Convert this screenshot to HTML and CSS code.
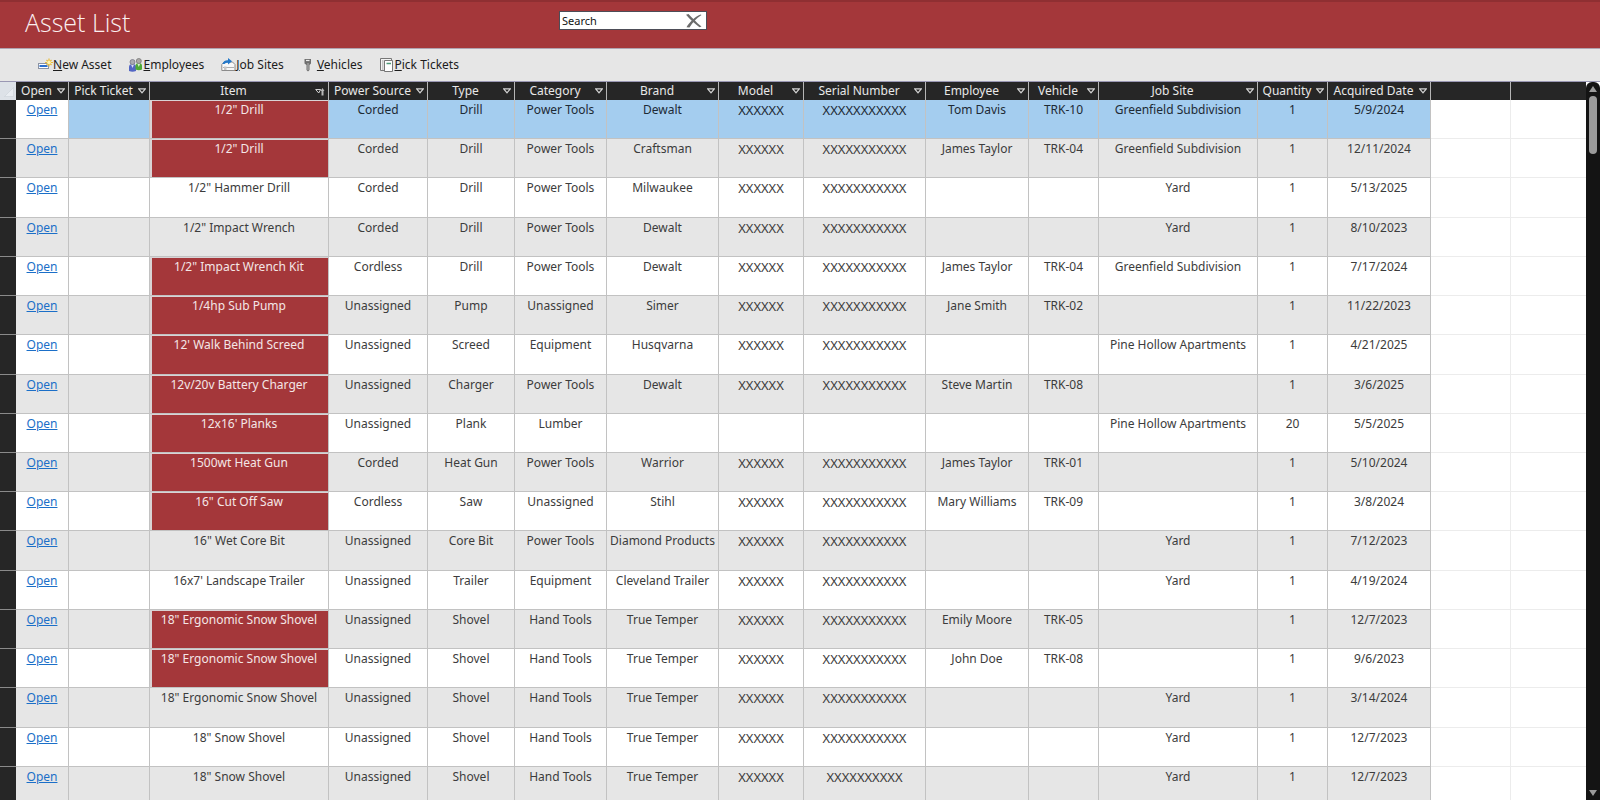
FILE: index.html
```html
<!DOCTYPE html>
<html lang="en">
<head>
<meta charset="utf-8">
<title>Asset List</title>
<link rel="stylesheet" href="styles.css">
</head>
<body>
<svg class="defs" width="0" height="0" aria-hidden="true">
  <symbol id="tri" viewBox="0 0 8 6"><path d="M.7.8h6.6L4 4.8z" fill="none" stroke="#d4d4d4" stroke-width="1.2"/></symbol>
</svg>
<header class="banner">
  <h1 class="title">Asset List</h1>
  <form class="search">
    <input class="search-input" type="text" value="Search" aria-label="Search">
    <button class="search-clear" type="button" aria-label="Clear search">
      <svg width="16" height="14" viewBox="0 0 16 14"><path d="M0 .8 2.500 0C6 3.600 10.500 8.500 15.500 12.600L13.500 13.300C9 10 4 5.500 0 .8z" fill="#6c6c6c"/><path d="M14.500.4 15.500 1C10 4.500 6.500 8.500 3.500 13.400L.5 13.200C3.500 8 8.500 3 14.500.4z" fill="#6c6c6c"/></svg>
    </button>
  </form>
</header>
<nav class="toolbar" aria-label="Commands">
  <button class="command" type="button"><svg width="15" height="14" viewBox="0 0 15 14"><rect x=".5" y="5.500" width="10" height="5" fill="#fff" stroke="#8b93a3"/><rect x="1.500" y="7" width="8" height="2" fill="#2b6fd0"/><path d="M11 .5v8M7 4.500h8M8.500 2l5 5M13.500 2l-5 5" stroke="#e9bd3a" stroke-width="1.200"/><circle cx="11" cy="4.500" r="1.800" fill="#fff3b0"/></svg><span><u>N</u>ew Asset</span></button>
  <button class="command" type="button"><svg width="15" height="14" viewBox="0 0 15 14"><path d="M1 13V9q0-3 3.500-3T8 9v4q-3.500 1.500-7 0z" fill="#5366c4"/><path d="M3 6.500 4.500 10 6 6.500z" fill="#d8ddf5"/><circle cx="4.500" cy="4" r="2.500" fill="#a9aab2" stroke="#777987" stroke-width=".8"/><path d="M7.500 11.500V8q0-3 3.300-3T14 8v3.500q-3.200 1.500-6.500 0z" fill="#4eaa36"/><path d="m9.300 5.500 1.500 3.500 1.500-3.500z" fill="#d9f2d0"/><circle cx="10.800" cy="3" r="2.500" fill="#aaa8a6" stroke="#777" stroke-width=".8"/></svg><span><u>E</u>mployees</span></button>
  <button class="command" type="button"><svg width="15" height="14" viewBox="0 0 15 14"><path d="M.8 6.500 3 4h8.500l2.500 2.500v6H.8z" fill="#f8f8f8" stroke="#8c8c8c"/><path d="M2 9.500h11" stroke="#b0b0b0"/><path d="M3 12V8.500h2.500V12" fill="#c6c6c6"/><path d="M1.500 6Q2.500 2 7 2.200V0L11 3.300 7 6.500V4.800Q5 4.500 3.500 6z" fill="#2478c9"/></svg><span><u>J</u>ob Sites</span></button>
  <button class="command command-wide" type="button"><svg width="10" height="14" viewBox="0 0 10 14"><path d="M1.500 1h6.500v4.500L6.500 7v5L5 13.500 3.500 12V7l-2-1.500z" fill="#6f6f6f"/><path d="M3 2.500h3.500" stroke="#eee" stroke-width="1.200"/><path d="M5 5v7" stroke="#b8b8b8"/></svg><span><u>V</u>ehicles</span></button>
  <button class="command" type="button"><svg width="15" height="14" viewBox="0 0 15 14"><path d="M.5.5h11v12H.5z" fill="#f3f3f3" stroke="#777"/><path d="M2 3h1.500M2 5h1.500M2 7h1.500M2 9h1.500M2 11h1.500" stroke="#999"/><path d="M4.500 2.500h8v11h-8z" fill="#fff" stroke="#777"/><path d="M6.500 5.500h4.500" stroke="#4f9a79" stroke-width="1.500"/></svg><span><u>P</u>ick Tickets</span></button>
</nav>
<main class="datasheet">
<div class="sheet">
<table class="assets">
<colgroup><col class="w-mark"><col class="w-open"><col class="w-ticket"><col class="w-item"><col class="w-power"><col class="w-type"><col class="w-category"><col class="w-brand"><col class="w-model"><col class="w-serial"><col class="w-employee"><col class="w-vehicle"><col class="w-site"><col class="w-qty"><col class="w-date"><col class="w-blank"><col></colgroup>
<thead><tr>
<td class="corner"><svg width="10" height="10" viewBox="0 0 10 10"><path d="M9.500.5v9H.5z" fill="#e9edf2" stroke="#cbd1d9" stroke-width=".6"/></svg></td>
<th>Open<button class="sort" type="button" aria-label="Filter Open"><svg width="8" height="6"><use href="#tri"/></svg></button></th>
<th>Pick Ticket<button class="sort" type="button" aria-label="Filter Pick Ticket"><svg width="8" height="6"><use href="#tri"/></svg></button></th>
<th>Item<button class="sort" type="button" aria-label="Filter Item, sorted"><svg width="10" height="8" viewBox="0 0 10 8"><path d="M.7 1.500h5L3.700 5z" fill="none" stroke="#d4d4d4"/><path d="M7.500 0 9.500 3H8.500v4.500h-2V3h-1z" fill="#b8b8b8"/></svg></button></th>
<th>Power Source<button class="sort" type="button" aria-label="Filter Power Source"><svg width="8" height="6"><use href="#tri"/></svg></button></th>
<th>Type<button class="sort" type="button" aria-label="Filter Type"><svg width="8" height="6"><use href="#tri"/></svg></button></th>
<th>Category<button class="sort" type="button" aria-label="Filter Category"><svg width="8" height="6"><use href="#tri"/></svg></button></th>
<th>Brand<button class="sort" type="button" aria-label="Filter Brand"><svg width="8" height="6"><use href="#tri"/></svg></button></th>
<th>Model<button class="sort" type="button" aria-label="Filter Model"><svg width="8" height="6"><use href="#tri"/></svg></button></th>
<th>Serial Number<button class="sort" type="button" aria-label="Filter Serial Number"><svg width="8" height="6"><use href="#tri"/></svg></button></th>
<th>Employee<button class="sort" type="button" aria-label="Filter Employee"><svg width="8" height="6"><use href="#tri"/></svg></button></th>
<th>Vehicle<button class="sort" type="button" aria-label="Filter Vehicle"><svg width="8" height="6"><use href="#tri"/></svg></button></th>
<th>Job Site<button class="sort" type="button" aria-label="Filter Job Site"><svg width="8" height="6"><use href="#tri"/></svg></button></th>
<th>Quantity<button class="sort" type="button" aria-label="Filter Quantity"><svg width="8" height="6"><use href="#tri"/></svg></button></th>
<th>Acquired Date<button class="sort" type="button" aria-label="Filter Acquired Date"><svg width="8" height="6"><use href="#tri"/></svg></button></th>
<td></td><td class="last"></td>
</tr></thead>
<tbody>
<tr class="selected"><td class="mark"><td class="open"><a href="#">Open</a><td><td class="out">1/2" Drill<td>Corded<td>Drill<td>Power Tools<td>Dewalt<td class="code">XXXXXX<td class="code">XXXXXXXXXXX<td>Tom Davis<td>TRK-10<td>Greenfield Subdivision<td>1<td>5/9/2024<td class="blank"><td class="blank last"></tr>
<tr><td class="mark"><td><a href="#">Open</a><td><td class="out">1/2" Drill<td>Corded<td>Drill<td>Power Tools<td>Craftsman<td class="code">XXXXXX<td class="code">XXXXXXXXXXX<td>James Taylor<td>TRK-04<td>Greenfield Subdivision<td>1<td>12/11/2024<td class="blank"><td class="blank last"></tr>
<tr><td class="mark"><td><a href="#">Open</a><td><td>1/2" Hammer Drill<td>Corded<td>Drill<td>Power Tools<td>Milwaukee<td class="code">XXXXXX<td class="code">XXXXXXXXXXX<td><td><td>Yard<td>1<td>5/13/2025<td class="blank"><td class="blank last"></tr>
<tr><td class="mark"><td><a href="#">Open</a><td><td>1/2" Impact Wrench<td>Corded<td>Drill<td>Power Tools<td>Dewalt<td class="code">XXXXXX<td class="code">XXXXXXXXXXX<td><td><td>Yard<td>1<td>8/10/2023<td class="blank"><td class="blank last"></tr>
<tr><td class="mark"><td><a href="#">Open</a><td><td class="out">1/2" Impact Wrench Kit<td>Cordless<td>Drill<td>Power Tools<td>Dewalt<td class="code">XXXXXX<td class="code">XXXXXXXXXXX<td>James Taylor<td>TRK-04<td>Greenfield Subdivision<td>1<td>7/17/2024<td class="blank"><td class="blank last"></tr>
<tr><td class="mark"><td><a href="#">Open</a><td><td class="out">1/4hp Sub Pump<td>Unassigned<td>Pump<td>Unassigned<td>Simer<td class="code">XXXXXX<td class="code">XXXXXXXXXXX<td>Jane Smith<td>TRK-02<td><td>1<td>11/22/2023<td class="blank"><td class="blank last"></tr>
<tr><td class="mark"><td><a href="#">Open</a><td><td class="out">12' Walk Behind Screed<td>Unassigned<td>Screed<td>Equipment<td>Husqvarna<td class="code">XXXXXX<td class="code">XXXXXXXXXXX<td><td><td>Pine Hollow Apartments<td>1<td>4/21/2025<td class="blank"><td class="blank last"></tr>
<tr><td class="mark"><td><a href="#">Open</a><td><td class="out">12v/20v Battery Charger<td>Unassigned<td>Charger<td>Power Tools<td>Dewalt<td class="code">XXXXXX<td class="code">XXXXXXXXXXX<td>Steve Martin<td>TRK-08<td><td>1<td>3/6/2025<td class="blank"><td class="blank last"></tr>
<tr><td class="mark"><td><a href="#">Open</a><td><td class="out">12x16' Planks<td>Unassigned<td>Plank<td>Lumber<td><td><td><td><td><td>Pine Hollow Apartments<td>20<td>5/5/2025<td class="blank"><td class="blank last"></tr>
<tr><td class="mark"><td><a href="#">Open</a><td><td class="out">1500wt Heat Gun<td>Corded<td>Heat Gun<td>Power Tools<td>Warrior<td class="code">XXXXXX<td class="code">XXXXXXXXXXX<td>James Taylor<td>TRK-01<td><td>1<td>5/10/2024<td class="blank"><td class="blank last"></tr>
<tr><td class="mark"><td><a href="#">Open</a><td><td class="out">16" Cut Off Saw<td>Cordless<td>Saw<td>Unassigned<td>Stihl<td class="code">XXXXXX<td class="code">XXXXXXXXXXX<td>Mary Williams<td>TRK-09<td><td>1<td>3/8/2024<td class="blank"><td class="blank last"></tr>
<tr><td class="mark"><td><a href="#">Open</a><td><td>16" Wet Core Bit<td>Unassigned<td>Core Bit<td>Power Tools<td>Diamond Products<td class="code">XXXXXX<td class="code">XXXXXXXXXXX<td><td><td>Yard<td>1<td>7/12/2023<td class="blank"><td class="blank last"></tr>
<tr><td class="mark"><td><a href="#">Open</a><td><td>16x7' Landscape Trailer<td>Unassigned<td>Trailer<td>Equipment<td>Cleveland Trailer<td class="code">XXXXXX<td class="code">XXXXXXXXXXX<td><td><td>Yard<td>1<td>4/19/2024<td class="blank"><td class="blank last"></tr>
<tr><td class="mark"><td><a href="#">Open</a><td><td class="out">18" Ergonomic Snow Shovel<td>Unassigned<td>Shovel<td>Hand Tools<td>True Temper<td class="code">XXXXXX<td class="code">XXXXXXXXXXX<td>Emily Moore<td>TRK-05<td><td>1<td>12/7/2023<td class="blank"><td class="blank last"></tr>
<tr><td class="mark"><td><a href="#">Open</a><td><td class="out">18" Ergonomic Snow Shovel<td>Unassigned<td>Shovel<td>Hand Tools<td>True Temper<td class="code">XXXXXX<td class="code">XXXXXXXXXXX<td>John Doe<td>TRK-08<td><td>1<td>9/6/2023<td class="blank"><td class="blank last"></tr>
<tr><td class="mark"><td><a href="#">Open</a><td><td>18" Ergonomic Snow Shovel<td>Unassigned<td>Shovel<td>Hand Tools<td>True Temper<td class="code">XXXXXX<td class="code">XXXXXXXXXXX<td><td><td>Yard<td>1<td>3/14/2024<td class="blank"><td class="blank last"></tr>
<tr><td class="mark"><td><a href="#">Open</a><td><td>18" Snow Shovel<td>Unassigned<td>Shovel<td>Hand Tools<td>True Temper<td class="code">XXXXXX<td class="code">XXXXXXXXXXX<td><td><td>Yard<td>1<td>12/7/2023<td class="blank"><td class="blank last"></tr>
<tr><td class="mark"><td><a href="#">Open</a><td><td>18" Snow Shovel<td>Unassigned<td>Shovel<td>Hand Tools<td>True Temper<td class="code">XXXXXX<td class="code">XXXXXXXXXX<td><td><td>Yard<td>1<td>12/7/2023<td class="blank"><td class="blank last"></tr>
</tbody>
</table>
</div>
<div class="scrollbar">
  <button class="scroll-step" type="button" aria-label="Scroll up"><svg width="8" height="6" viewBox="0 0 8 6"><path d="M4 0 8 6H0z" fill="#9b9b9b"/></svg></button>
  <div class="scroll-track"><div class="scroll-thumb"></div></div>
  <button class="scroll-step" type="button" aria-label="Scroll down"><svg width="8" height="6" viewBox="0 0 8 6"><path d="M0 0h8L4 6z" fill="#9b9b9b"/></svg></button>
</div>
</main>
</body>
</html>
```
FILE: styles.css
```css
* { box-sizing: border-box; }
body {
  margin: 0;
  height: 100vh;
  display: flex;
  flex-direction: column;
  overflow: hidden;
  font: 12px/18px "Noto Sans", "Open Sans", sans-serif;
  color: #3c3c3c;
  background: #fff;
}
.defs { position: absolute; }
button { font: inherit; color: inherit; background: none; border: 0; padding: 0; margin: 0; }
svg { display: block; flex: none; }

.banner {
  flex: none;
  display: grid;
  grid-template-columns: 35% 1fr;
  height: 49px;
  background: #a4373a;
  border-top: 2px solid #8f2f32;
  border-bottom: 1px solid #b0a3b0;
}
.title {
  margin: 0;
  padding: 4px 0 0 25px;
  font: 300 25px/32px "Open Sans", "Noto Sans", sans-serif;
  color: #fbeff0;
}
.search {
  display: flex;
  align-items: center;
  width: 148px;
  height: 19px;
  margin: 9px 0 0 -1px;
  padding-right: 4px;
  background: #fff;
  border: 1px solid #4d4d57;
}
.search-input {
  flex: 1;
  min-width: 0;
  border: 0;
  outline: 0;
  padding: 0 0 0 2px;
  background: none;
  font: 11px/16px "Noto Sans", sans-serif;
  color: #111;
}

.toolbar {
  flex: none;
  display: flex;
  align-items: center;
  gap: 17px;
  height: 33px;
  padding: 0 38px;
  background: #e6e6e6;
  border-bottom: 1px solid #9a98b4;
  color: #1c1c1c;
}
.command { display: flex; align-items: center; }
.command-wide { gap: 4px; padding-left: 2px; }

.datasheet { flex: 1; min-height: 0; display: flex; }
.sheet { flex: 1; min-width: 0; overflow: hidden; }
.assets {
  width: 100%;
  height: calc(100% + 6px);
  table-layout: fixed;
  border-collapse: separate;
  border-spacing: 0;
}
.w-mark { width: 16px; }
.w-open { width: 53px; }
.w-ticket { width: 81px; }
.w-item { width: 179px; }
.w-power { width: 99px; }
.w-type { width: 87px; }
.w-category { width: 92px; }
.w-brand { width: 112px; }
.w-model { width: 85px; }
.w-serial { width: 122px; }
.w-employee { width: 103px; }
.w-vehicle { width: 70px; }
.w-site { width: 159px; }
.w-qty { width: 70px; }
.w-date { width: 103px; }
.w-blank { width: 80px; }

.assets th, .assets td {
  padding: 0;
  text-align: center;
  vertical-align: top;
  white-space: nowrap;
  font-weight: 400;
}
.assets thead tr { height: 18px; }
.assets thead th, .assets thead td {
  position: relative;
  height: 18px;
  line-height: 18px;
  background: #262626;
  color: #e8e8e8;
  border-right: 1px solid #b5b5b5;
}
.assets thead th { padding-right: 11px; }
.assets thead .corner { background: #dde2e8; border-right: 0; padding: 5px 0 0 4px; }
.assets .last { border-right: 0; }
.sort { position: absolute; right: 3px; top: 6px; }

.assets tbody td {
  padding-top: 1px;
  border-right: 1px solid #c2c2c2;
  border-bottom: 1px solid #c2c2c2;
}
.assets tbody tr:nth-child(even) { background: #e6e6e6; }
.assets tbody .selected { background: #a4cdef; color: #1d2a35; }
.assets .selected .open { background: #fff; }
.assets tbody .mark { background: #262626; border-right: 0; border-bottom-color: #8a8a8a; }
.assets tbody .code { font-size: 13px; }
.assets tbody .blank { background: #fff; border-color: #ececec; }
.assets tbody .last { border-right: 0; }
.assets tbody .out {
  background: #a4373a;
  color: #f4e6e6;
  box-shadow: inset 2px 1px #d9d3d5;
}
.assets a { color: #1b6fc8; }

.scrollbar {
  flex: none;
  width: 14px;
  display: flex;
  flex-direction: column;
  align-items: center;
  background: #141414;
  border-radius: 6px 6px 0 0;
  padding: 4px 0;
}
.scroll-step { display: flex; }
.scroll-track { flex: 1; padding-top: 4px; }
.scroll-thumb { width: 8px; height: 58px; border-radius: 4px; background: #9b9b9b; }
```
